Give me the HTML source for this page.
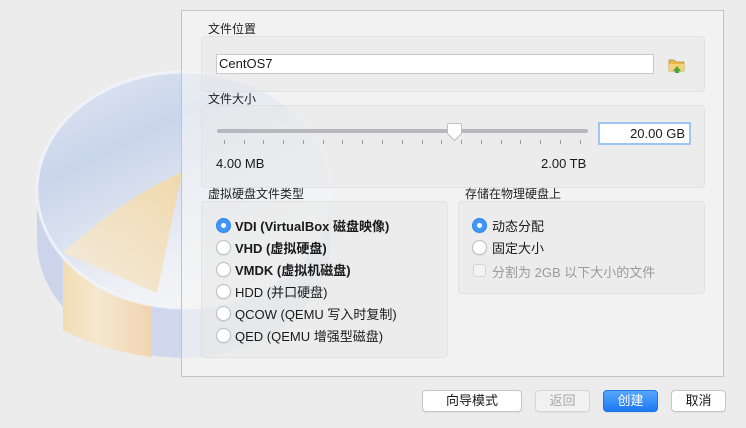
<!DOCTYPE html>
<html><head><meta charset="utf-8"><style>
*{box-sizing:border-box;margin:0;padding:0}
body{width:746px;height:428px;background:#ececec;position:relative;overflow:hidden;font-family:"Liberation Sans","Noto Sans CJK SC",sans-serif;font-size:13px;color:#1a1a1a}
.abs{position:absolute}
#disk{position:absolute;left:0;top:0}
.panel{position:absolute;left:181px;top:10px;width:543px;height:367px;background:rgba(246,246,246,0.62);border:1px solid #c4c4c4}
.grp{position:absolute;background:rgba(228,228,228,0.45);border:1px solid rgba(215,215,215,0.5);border-radius:4px}
.lbl{position:absolute;font-size:12px;color:#222}
.input{position:absolute;background:#fff;border:1px solid #c9c9c9;font-size:13px;padding-left:2px;line-height:18px}
.radio{position:absolute;width:15px;height:15px;border-radius:50%;background:#fff;border:1px solid #bdbdbd;box-shadow:0 1px 1px rgba(0,0,0,.08)}
.radio.on{background:#3f97f6;border-color:#2f86ea}
.radio.on::after{content:"";position:absolute;left:4px;top:4px;width:5px;height:5px;border-radius:50%;background:#fff}
.rt{position:absolute;font-size:13px}
.b{font-weight:bold}
.btn{position:absolute;top:390px;height:22px;background:#fff;border:1px solid #c6c6c6;border-radius:4px;text-align:center;line-height:20px;font-size:13px;box-shadow:0 1px 1px rgba(0,0,0,.06)}
.tick{position:absolute;top:140px;width:1px;height:4px;background:#9a9a9a}
</style></head><body>
<svg id="disk" width="746" height="428">
<defs>
<linearGradient id="top" x1="0" y1="0" x2="0.6" y2="1"><stop offset="0" stop-color="#e4e9f4"/><stop offset=".35" stop-color="#c9d5eb"/><stop offset=".8" stop-color="#eef0f5"/><stop offset="1" stop-color="#f6f6f6"/></linearGradient>
<linearGradient id="side" x1="0" y1="0" x2="1" y2="0"><stop offset="0" stop-color="#cbd4ea"/><stop offset="1" stop-color="#d4dcef"/></linearGradient>
<linearGradient id="oside" x1="0" y1="0" x2="1" y2="0"><stop offset="0" stop-color="#f3dcb3"/><stop offset=".4" stop-color="#f4e8d0"/><stop offset="1" stop-color="#f1d4b0"/></linearGradient>
<linearGradient id="wedge" x1="1" y1="0" x2="0" y2="1"><stop offset="0" stop-color="#f3d7a5"/><stop offset="1" stop-color="#f4ecdc"/></linearGradient>
</defs>
<path d="M37,192 L37,240 A147,118 0 0 0 331,240 L331,192 Z" fill="url(#side)"/>
<path d="M63,250 L63,330 Q100,350 152,357 L152,282 Z" fill="url(#oside)"/>
<ellipse cx="184" cy="190" rx="147" ry="118" fill="url(#top)"/>
<path d="M157,293 L63,253 Q120,200 182,172 Z" fill="url(#wedge)" opacity=".9"/>
<ellipse cx="184" cy="190" rx="147" ry="118" fill="none" stroke="#f3f5fa" stroke-width="3" opacity=".8"/>
</svg>
<div class="panel"></div>
<div class="lbl" style="left:208px;top:20px">文件位置</div>
<div class="grp" style="left:201px;top:36px;width:504px;height:56px"></div>
<div class="input" style="left:216px;top:54px;width:438px;height:20px">CentOS7</div>
<svg class="abs" style="left:668px;top:57px" width="18" height="16"><path d="M1,3 h5 l2,2 h8 v9 h-15z" fill="#e9b94a" stroke="#b88a2a" stroke-width=".7"/><path d="M1,7 h15 v7 h-15z" fill="#f5d27a"/><path d="M5,14 l4,-5 l4,5 h-2 v2 h-4 v-2z" fill="#4aa83a"/></svg>
<div class="lbl" style="left:208px;top:90px">文件大小</div>
<div class="grp" style="left:201px;top:105px;width:504px;height:83px"></div>
<div class="abs" style="left:217px;top:129px;width:371px;height:4px;border-radius:2px;background:#b7b7bd"></div>
<svg class="abs" style="left:446px;top:123px" width="17" height="20"><path d="M1.5,2.5 q0,-2 2,-2 h10 q2,0 2,2 v8 l-7,7 l-7,-7z" fill="#fff" stroke="#c0c0c0"/></svg>
<div class="tick" style="left:224px"></div><div class="tick" style="left:244px"></div><div class="tick" style="left:263px"></div><div class="tick" style="left:283px"></div><div class="tick" style="left:303px"></div><div class="tick" style="left:323px"></div><div class="tick" style="left:342px"></div><div class="tick" style="left:362px"></div><div class="tick" style="left:382px"></div><div class="tick" style="left:402px"></div><div class="tick" style="left:422px"></div><div class="tick" style="left:441px"></div><div class="tick" style="left:461px"></div><div class="tick" style="left:481px"></div><div class="tick" style="left:501px"></div><div class="tick" style="left:520px"></div><div class="tick" style="left:540px"></div><div class="tick" style="left:560px"></div><div class="tick" style="left:580px"></div>
<div class="rt" style="left:216px;top:156px">4.00 MB</div>
<div class="rt" style="left:541px;top:156px">2.00 TB</div>
<div class="input" style="left:598px;top:122px;width:93px;height:23px;border:2px solid #9fc6f3;text-align:right;padding-right:4px;line-height:19px">20.00 GB</div>
<div class="lbl" style="left:208px;top:185px">虚拟硬盘文件类型</div>
<div class="grp" style="left:201px;top:201px;width:247px;height:157px"></div>
<div class="radio on" style="left:216px;top:218px"></div><div class="rt b" style="left:235px;top:216px">VDI (VirtualBox 磁盘映像)</div>
<div class="radio" style="left:216px;top:240px"></div><div class="rt b" style="left:235px;top:238px">VHD (虚拟硬盘)</div>
<div class="radio" style="left:216px;top:262px"></div><div class="rt b" style="left:235px;top:260px">VMDK (虚拟机磁盘)</div>
<div class="radio" style="left:216px;top:284px"></div><div class="rt" style="left:235px;top:282px">HDD (并口硬盘)</div>
<div class="radio" style="left:216px;top:306px"></div><div class="rt" style="left:235px;top:304px">QCOW (QEMU 写入时复制)</div>
<div class="radio" style="left:216px;top:328px"></div><div class="rt" style="left:235px;top:326px">QED (QEMU 增强型磁盘)</div>
<div class="lbl" style="left:465px;top:185px">存储在物理硬盘上</div>
<div class="grp" style="left:458px;top:201px;width:247px;height:93px"></div>
<div class="radio on" style="left:472px;top:218px"></div><div class="rt" style="left:492px;top:216px">动态分配</div>
<div class="radio" style="left:472px;top:240px"></div><div class="rt" style="left:492px;top:238px">固定大小</div>
<div class="abs" style="left:473px;top:264px;width:13px;height:13px;border:1px solid #d4d4d4;border-radius:3px;background:#f3f3f3"></div>
<div class="rt" style="left:492px;top:262px;color:#9a9a9a">分割为 2GB 以下大小的文件</div>
<div class="btn" style="left:422px;width:100px">向导模式</div>
<div class="btn" style="left:535px;width:55px;background:#f1f1f1;color:#a8a8a8;border-color:#d6d6d6">返回</div>
<div class="btn" style="left:603px;width:55px;background:linear-gradient(#59a6fb,#1b78f2);border-color:#1f74e0;color:#fff">创建</div>
<div class="btn" style="left:671px;width:55px">取消</div>
</body></html>
